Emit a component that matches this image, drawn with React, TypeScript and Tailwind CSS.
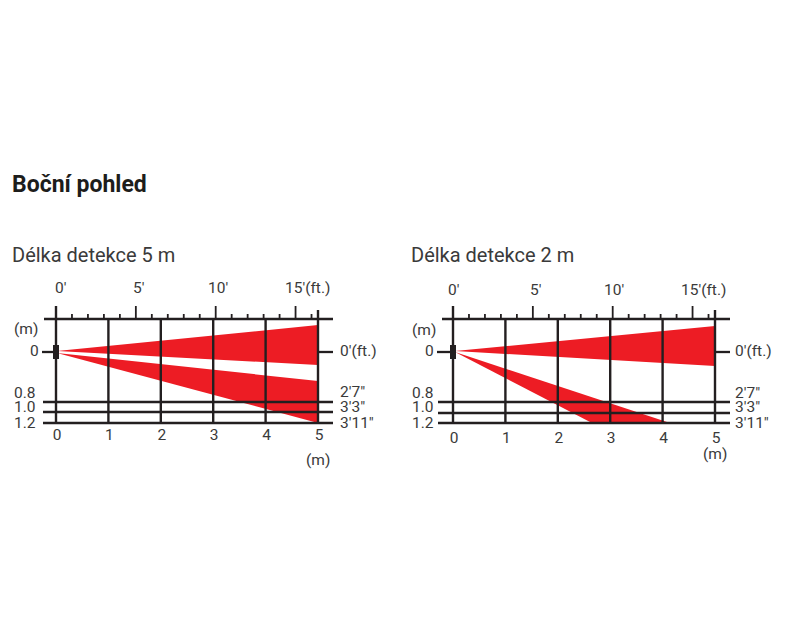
import React from "react"

type Chart = {
  left: number
  width: number
  x0: number
  axisFrom: number
  axisTo: number
  gridFrom: number
  hLines: number[]
  beams: string[]
  topLabels: [string, number, number][]
  leftLabels: [string, number, number][]
  rightX: number
  rightLabels: [string, number][]
  numY: number
  unit: [number, number]
}

const M = 52.4
const FT = 15.97
const INK = "#231f20"
const RED = "#ed1c24"

const charts: Chart[] = [
  {
    left: 12,
    width: 390,
    x0: 56,
    axisFrom: 44,
    axisTo: 333,
    gridFrom: 43,
    hLines: [402, 412, 423],
    beams: ["57,351 318,325 318,365", "57,353 318,381 318,423"],
    topLabels: [
      ["0′", 55, 293],
      ["5′", 133, 293],
      ["10′", 208, 293],
      ["15′(ft.)", 285, 293],
    ],
    leftLabels: [
      ["(m)", 14, 334],
      ["0", 30, 356],
      ["0.8", 14, 398],
      ["1.0", 14, 412],
      ["1.2", 14, 428],
    ],
    rightX: 340,
    rightLabels: [
      ["0′(ft.)", 356],
      ["2′7″", 397],
      ["3′3″", 412],
      ["3′11″", 428],
    ],
    numY: 440,
    unit: [306, 465],
  },
  {
    left: 411,
    width: 385,
    x0: 453,
    axisFrom: 442,
    axisTo: 730,
    gridFrom: 438,
    hLines: [402, 413, 423],
    beams: ["455,351 715,326 715,366", "455,352 670,423 592,423"],
    topLabels: [
      ["0′", 448, 295],
      ["5′", 530, 295],
      ["10′", 604, 295],
      ["15′(ft.)", 681, 295],
    ],
    leftLabels: [
      ["(m)", 412, 335],
      ["0", 425, 356],
      ["0.8", 412, 398],
      ["1.0", 412, 412],
      ["1.2", 412, 428],
    ],
    rightX: 735,
    rightLabels: [
      ["0′(ft.)", 356],
      ["2′7″", 398],
      ["3′3″", 412],
      ["3′11″", 428],
    ],
    numY: 443,
    unit: [703, 459],
  },
]

function RangeChart({ c }: { c: Chart }) {
  const x5 = c.x0 + 5 * M
  return (
    <svg
      width={c.width}
      height={200}
      viewBox={`${c.left} 270 ${c.width} 200`}
      className="block overflow-visible"
    >
      {c.beams.map((p) => (
        <polygon key={p} points={p} fill={RED} />
      ))}

      {/* top feet scale */}
      <line x1={c.axisFrom} y1={319} x2={c.axisTo} y2={319} stroke={INK} strokeWidth={2.6} />
      {Array.from({ length: 17 }, (_, i) => (
        <line
          key={i}
          x1={c.x0 + i * FT}
          x2={c.x0 + i * FT}
          y1={i % 5 === 0 ? 306 : 314}
          y2={319}
          stroke={INK}
          strokeWidth={1.8}
        />
      ))}

      {/* metre grid */}
      {[0, 1, 2, 3, 4, 5].map((m) => (
        <line
          key={m}
          x1={c.x0 + m * M}
          x2={c.x0 + m * M}
          y1={m === 0 ? 306 : m === 5 ? 310 : 319}
          y2={424}
          stroke={INK}
          strokeWidth={2.4}
        />
      ))}
      {c.hLines.map((y, i) => (
        <line
          key={y}
          x1={c.gridFrom}
          x2={c.axisTo}
          y1={y}
          y2={y}
          stroke={INK}
          strokeWidth={i === 0 ? 2.7 : 2.3}
        />
      ))}

      {/* sensor and 0 marks */}
      <line x1={c.gridFrom - 1} x2={c.x0} y1={352} y2={352} stroke={INK} strokeWidth={2.3} />
      <line x1={x5} x2={c.axisTo} y1={352} y2={352} stroke={INK} strokeWidth={2.3} />
      <rect x={c.x0 - 3} y={345} width={6} height={14} fill={INK} />

      <g fill="#3a3a3a" fontSize={15.5}>
        {c.topLabels.map(([t, x, y]) => (
          <text key={t} x={x} y={y}>
            {t}
          </text>
        ))}
        {c.leftLabels.map(([t, x, y]) => (
          <text key={t} x={x} y={y}>
            {t}
          </text>
        ))}
        {c.rightLabels.map(([t, y]) => (
          <text key={t} x={c.rightX} y={y}>
            {t}
          </text>
        ))}
        {[0, 1, 2, 3, 4, 5].map((m) => (
          <text key={m} x={c.x0 + m * M + 1} y={c.numY} textAnchor="middle">
            {m}
          </text>
        ))}
        <text x={c.unit[0]} y={c.unit[1]}>
          (m)
        </text>
      </g>
    </svg>
  )
}

export default function App() {
  return (
    <div className="min-h-[640px] w-[800px] bg-white font-['Roboto',sans-serif] text-[#333]">
      <div className="pl-[12px] pt-[173px]">
        <h2 className="text-[23px] font-bold leading-none text-[#1d1d1b]">Boční pohled</h2>
      </div>
      <div className="mt-[49px] flex pl-[12px]">
        {charts.map((c, i) => (
          <div key={i} className={i === 0 ? "w-[399px]" : ""}>
            <p className="text-[20px] leading-none text-[#3a3a3a]">
              Délka detekce {i === 0 ? "5" : "2"} m
            </p>
            <div className="mt-[5px]">
              <RangeChart c={c} />
            </div>
          </div>
        ))}
      </div>
    </div>
  )
}
